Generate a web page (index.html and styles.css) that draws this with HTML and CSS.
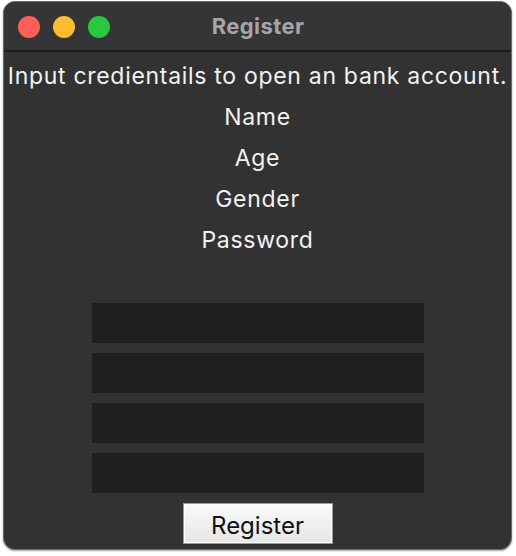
FILE: index.html
```html
<!DOCTYPE html>
<html>
<head>
<meta charset="utf-8">
<link rel="stylesheet" href="styles.css">
</head>
<body>
<div class="window">
  <div class="titlebar">
    <div class="lights">
      <span class="light red"></span>
      <span class="light yellow"></span>
      <span class="light green"></span>
    </div>
    <div class="title">Register</div>
  </div>
  <div class="content">
    <div class="labels">
      <div class="line">Input credientails to open an bank account.</div>
      <div class="line">Name</div>
      <div class="line">Age</div>
      <div class="line">Gender</div>
      <div class="line">Password</div>
    </div>
    <div class="fields">
      <div class="field"></div>
      <div class="field"></div>
      <div class="field"></div>
      <div class="field"></div>
    </div>
    <div class="actions">
      <button class="btn">Register</button>
    </div>
  </div>
</div>
</body>
</html>
```

FILE: styles.css
```css
html, body {
  margin: 0;
  padding: 0;
  background: #ffffff;
}
body {
  width: 516px;
  height: 556px;
  font-family: Inter, "Liberation Sans", sans-serif;
}
.window {
  margin: 1px 0 0 3px;
  width: 507px;
  height: 547px;
  border: 1px solid #6c6c6c;
  border-radius: 12px;
  background: #323232;
  overflow: hidden;
  display: flex;
  flex-direction: column;
  box-shadow: 0 1px 2px rgba(0,0,0,0.35);
}
.titlebar {
  height: 48px;
  flex: none;
  background: #353537;
  border-bottom: 2px solid #1c1c1c;
  position: relative;
  display: flex;
  align-items: center;
  justify-content: center;
}
.lights {
  position: absolute;
  left: 14px;
  top: 14px;
  display: flex;
  gap: 13px;
}
.light {
  width: 22px;
  height: 22px;
  border-radius: 50%;
  display: block;
}
.red { background: #fe5f57; }
.yellow { background: #febc2e; }
.green { background: #28c840; }
.title {
  color: #a6a6a8;
  font-size: 22px;
  font-weight: 700;
  letter-spacing: 0.4px;
  margin-left: 1px;
}
.content {
  flex: 1;
  display: flex;
  flex-direction: column;
  align-items: center;
}
.labels {
  padding-top: 4px;
  display: flex;
  flex-direction: column;
  align-items: center;
}
.line {
  color: #f2f2f2;
  font-size: 23px;
  letter-spacing: 0.7px;
  line-height: 41px;
  white-space: nowrap;
}
.fields {
  margin-top: 42px;
  display: flex;
  flex-direction: column;
  gap: 10px;
}
.field {
  width: 332px;
  height: 40px;
  background: #1f1f1f;
}
.actions {
  margin-top: 10px;
}
.btn {
  width: 150px;
  height: 41px;
  border: 1px solid #9a9a9a;
  background: linear-gradient(#fafafa, #e6e6e6);
  box-shadow: inset 0 0 0 1px #ffffff;
  font-family: Inter, "Liberation Sans", sans-serif;
  font-size: 24px;
  color: #111;
  padding: 3px 0 0 0;
}
```
